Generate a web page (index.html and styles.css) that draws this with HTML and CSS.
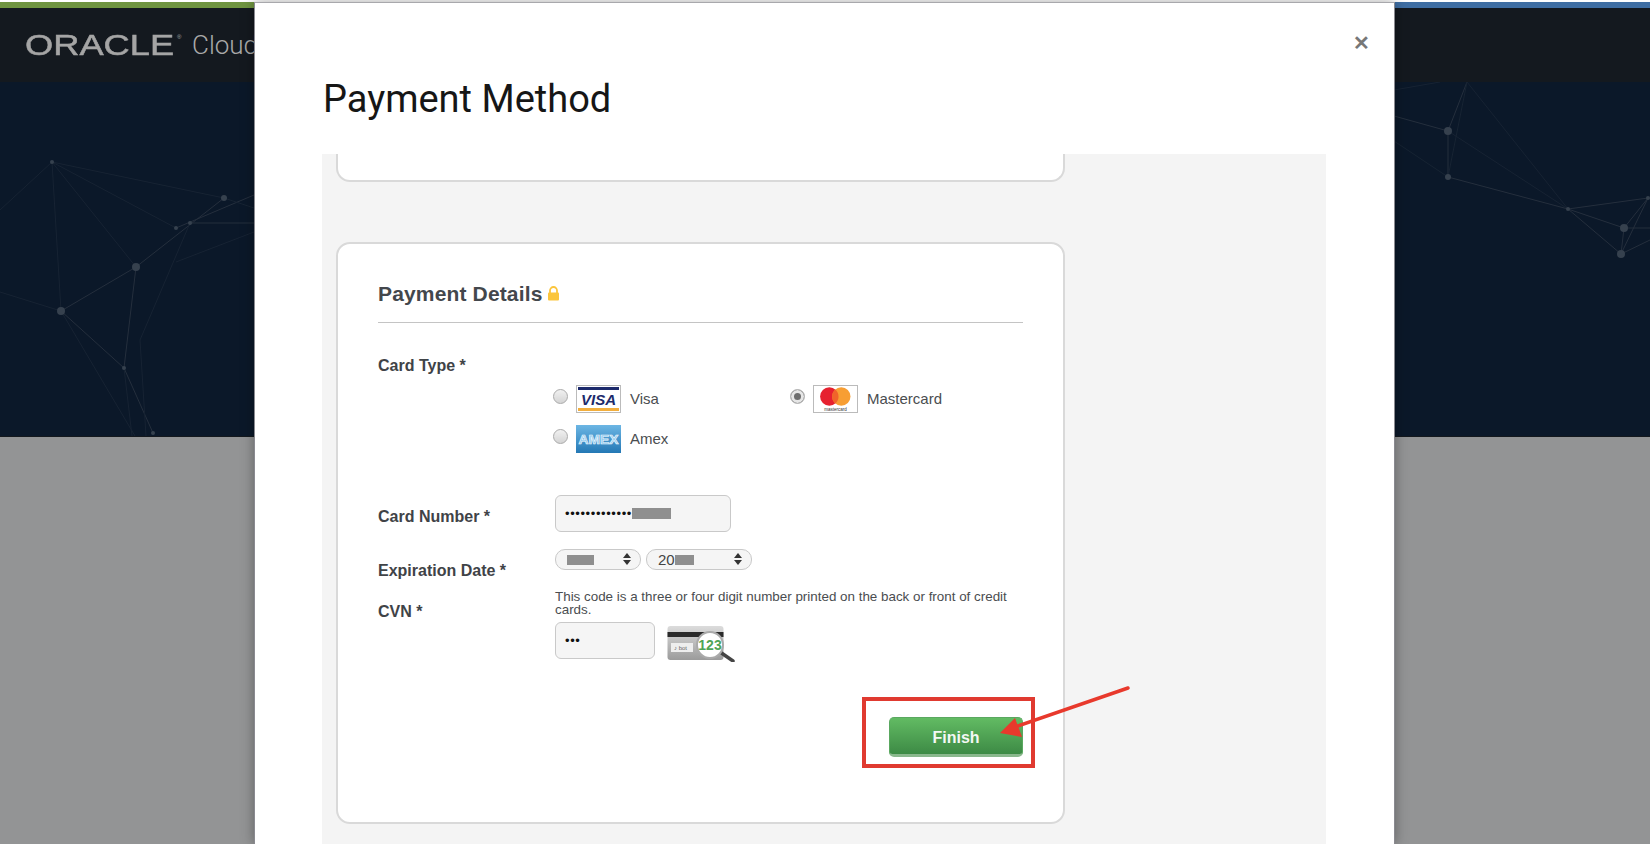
FILE: index.html

```html
<!DOCTYPE html>
<html lang="en">
<head>
    <meta charset="UTF-8">
    <meta name="viewport" content="width=device-width, initial-scale=1.0">
    <title>Payment Method</title>
    <link rel="stylesheet" href="styles.css">
</head>
<body>
    <div class="backdrop">
        <div class="topstrip"></div>
        <header class="topbar">
            <span class="logo">ORACLE</span><span class="logo-reg">®</span>
            <span class="product">Cloud</span>
        </header>
        <div class="hero">
            <svg class="network" width="1650" height="354" viewBox="0 82 1650 354">
                <g class="lines">
                    <path d="M61 311L136 267L224 198M61 311L124 368M136 267L124 368L153 433M176 228L254 195M190 223L254 223"/>
                    <path d="M1394 116L1448 131L1448 177L1568 209L1624 228L1650 228M1448 131L1467 82M1568 209L1621 254L1624 228L1648 198L1621 254L1650 240M1568 209L1648 198"/>
                </g>
                <g class="lines faint">
                    <path d="M0 210L52 162L61 311M52 162L136 267M52 162L176 228M52 162L224 198M0 292L61 311M61 311L135 436M124 368L132 436M224 198L254 208M190 223L140 340L146 436M254 232L176 262"/>
                    <path d="M1467 82L1448 177L1394 141M1448 131L1568 209M1467 82L1568 209M1394 90L1440 82"/>
                </g>
                <g class="nodes">
                    <circle cx="52" cy="162" r="2"/>
                    <circle cx="61" cy="311" r="4"/>
                    <circle cx="136" cy="267" r="4"/>
                    <circle cx="124" cy="368" r="2"/>
                    <circle cx="176" cy="228" r="2"/>
                    <circle cx="190" cy="223" r="2"/>
                    <circle cx="224" cy="198" r="3"/>
                    <circle cx="153" cy="433" r="2"/>
                    <circle cx="1448" cy="131" r="4"/>
                    <circle cx="1448" cy="177" r="3"/>
                    <circle cx="1568" cy="209" r="2"/>
                    <circle cx="1624" cy="228" r="4"/>
                    <circle cx="1621" cy="254" r="4"/>
                    <circle cx="1648" cy="198" r="2"/>
                </g>
            </svg>
        </div>
        <div class="lower"></div>
    </div>

    <div class="modal">
        <span class="close">&#10005;</span>
        <h1 class="modal-title">Payment Method</h1>
        <div class="panel">
            <div class="card-stub"></div>
            <section class="card">
                <h2 class="card-title">Payment Details
                    <svg class="lock" width="13" height="15" viewBox="0 0 13 15">
                        <path d="M3 7V4.500a3.500 3.500 0 0 1 7 0V7" fill="none" stroke="#fbc53c" stroke-width="1.800"/>
                        <rect x="1" y="6.500" width="11" height="8" rx="1" fill="#fbc53c"/>
                    </svg>
                </h2>

                <div class="row type-row">
                    <label class="field-label">Card Type *</label>
                    <div class="card-options">
                        <div class="option">
                            <span class="radio"></span>
                            <svg class="card-img" width="45" height="28" viewBox="0 0 45 28">
                                <rect x="0.500" y="0.500" width="44" height="27" fill="#fff" stroke="#bbb"/>
                                <rect x="2" y="2" width="41" height="3" fill="#1c2a6b"/>
                                <rect x="2" y="23" width="41" height="3" fill="#f2ae3d"/>
                                <text class="visa-text" x="22.500" y="19.500" text-anchor="middle">VISA</text>
                            </svg>
                            <span class="option-name">Visa</span>
                        </div>
                        <div class="option">
                            <span class="radio checked"></span>
                            <svg class="card-img" width="45" height="28" viewBox="0 0 45 28">
                                <rect x="0.500" y="0.500" width="44" height="27" fill="#fff" stroke="#bbb"/>
                                <circle cx="16.300" cy="11.500" r="9.200" fill="#e6212f"/>
                                <circle cx="28.300" cy="11.500" r="9.200" fill="#f79e33"/>
                                <path d="M22.300 4.500A9.200 9.200 0 0 1 22.300 18.500A9.200 9.200 0 0 1 22.300 4.500z" fill="#f0642a"/>
                                <text class="mc-text" x="22.500" y="25.500" text-anchor="middle">mastercard</text>
                            </svg>
                            <span class="option-name">Mastercard</span>
                        </div>
                        <div class="option">
                            <span class="radio"></span>
                            <svg class="card-img" width="45" height="28" viewBox="0 0 45 28">
                                <defs>
                                    <linearGradient id="amexbg" x1="0" y1="0" x2="0" y2="1">
                                        <stop offset="0" stop-color="#6cb6e4"/>
                                        <stop offset="1" stop-color="#2478b5"/>
                                    </linearGradient>
                                </defs>
                                <rect width="45" height="28" fill="url(#amexbg)"/>
                                <text class="amex-text" x="22.500" y="18.500" text-anchor="middle" textLength="40" lengthAdjust="spacingAndGlyphs">AMEX</text>
                            </svg>
                            <span class="option-name">Amex</span>
                        </div>
                    </div>
                </div>

                <div class="row number-row">
                    <label class="field-label">Card Number *</label>
                    <div class="input number-input">
                        <span class="dots">•••••••••••••</span><span class="redact redact-num"></span>
                    </div>
                </div>

                <div class="row date-row">
                    <label class="field-label">Expiration Date *</label>
                    <div class="select month-select">
                        <span class="redact redact-month"></span>
                        <span class="arrows"></span>
                    </div>
                    <div class="select year-select">
                        <span>20</span><span class="redact redact-year"></span>
                        <span class="arrows"></span>
                    </div>
                </div>

                <div class="row cvn-row">
                    <label class="field-label">CVN *</label>
                    <div class="cvn-field">
                        <p class="hint">This code is a three or four digit number printed on the back or front of credit cards.</p>
                        <div class="cvn-inputs">
                            <div class="input cvn-input"><span class="dots">•••</span></div>
                            <svg class="cvn-img" width="68" height="38" viewBox="0 0 68 38">
                                <defs>
                                    <linearGradient id="cvnbg" x1="0" y1="0" x2="0" y2="1">
                                        <stop offset="0" stop-color="#dcdcdc"/>
                                        <stop offset="1" stop-color="#9b9b9b"/>
                                    </linearGradient>
                                </defs>
                                <rect x="0.500" y="2" width="56" height="34" rx="3" fill="url(#cvnbg)"/>
                                <rect x="0.500" y="8" width="56" height="5" fill="#2a2a2a"/>
                                <rect x="4" y="19" width="22" height="9" fill="#eee"/>
                                <text class="sig-text" x="7" y="26">♪ bot</text>
                                <path d="M53 28L66 37" stroke="#444" stroke-width="3.500" stroke-linecap="round"/>
                                <circle cx="43" cy="21" r="13" fill="#fff" stroke="#aaa" stroke-width="2"/>
                                <text class="cvn-text" x="43" y="26" text-anchor="middle">123</text>
                            </svg>
                        </div>
                    </div>
                </div>

                <div class="actions">
                    <button class="finish" type="button">Finish</button>
                    <div class="callout"></div>
                    <svg class="pointer" width="140" height="60" viewBox="0 0 140 60">
                        <line x1="136" y1="3" x2="20" y2="43" stroke="#e8392c" stroke-width="3.500" stroke-linecap="round"/>
                        <polygon points="8,48 23,33 30,52" fill="#e8392c"/>
                    </svg>
                </div>
            </section>
        </div>
    </div>
</body>
</html>
```

FILE: styles.css

```css
html, body {
    margin: 0;
    padding: 0;
    height: 100%;
    overflow: hidden;
}

body {
    position: relative;
    background-color: #fff;
    font-family: 'Liberation Sans', Arial, sans-serif;
    color: #3f4347;
}

/* page behind the dialog */
.backdrop {
    display: flex;
    flex-direction: column;
    height: 100%;
}

.topstrip {
    height: 6px;
    margin-top: 2px;
    background: linear-gradient(to right, #6f9440 0, #6f9440 50%, #3f6ea3 50%, #3f6ea3 100%);
}

.topbar {
    display: flex;
    align-items: center;
    height: 74px;
    padding-left: 25px;
    background-color: #14191f;
    color: #a9a9a9;
}

.logo {
    display: inline-block;
    width: 119px;
    margin-right: 32px;
    font-size: 29px;
    line-height: 1;
    color: #a5a5a5;
    -webkit-text-stroke: 0.5px #a5a5a5;
    transform: scaleX(1.25);
    transform-origin: left center;
}

.logo-reg {
    margin: -16px 0 0 1px;
    font-size: 6px;
    width: 6px;
}

.product {
    margin-left: 9px;
    font-family: Roboto, sans-serif;
    font-weight: 300;
    font-size: 26px;
}

.hero {
    height: 354px;
    background-color: #0b1829;
    border-bottom: 1px solid #14181d;
    overflow: hidden;
}

.network {
    display: block;
    filter: blur(0.5px);
}

.lines path {
    fill: none;
    stroke: #252f3d;
    stroke-width: 1;
}

.lines.faint path {
    stroke: #172333;
}

.nodes circle {
    fill: #36414e;
}

.lower {
    flex: 1;
    background-color: #939495;
}

/* dialog */
.modal {
    position: absolute;
    top: 2px;
    left: 254px;
    width: 1141px;
    height: 842px;
    background-color: #fff;
    border-left: 1px solid #8a8a90;
    border-right: 1px solid #8a8a90;
    border-top: 1px solid #a8a8ac;
    box-shadow: 0 0 12px rgba(0, 0, 0, 0.35);
    box-sizing: border-box;
}

.close {
    position: absolute;
    top: 28px;
    right: 24px;
    font-size: 20px;
    font-weight: bold;
    line-height: 24px;
    color: #777;
}

.modal-title {
    box-sizing: border-box;
    margin: 0;
    padding: 74px 0 0 68px;
    height: 151px;
    font-family: Roboto, sans-serif;
    font-weight: 400;
    font-size: 38px;
    line-height: 44px;
    color: #161616;
}

.panel {
    width: 1004px;
    margin-left: 67px;
    height: 690px;
    background-color: #f4f4f4;
    overflow: hidden;
}

.card-stub {
    box-sizing: border-box;
    width: 729px;
    height: 28px;
    margin-left: 14px;
    background-color: #fff;
    border: 2px solid #d9d9d9;
    border-top: none;
    border-radius: 0 0 14px 14px;
}

.card {
    box-sizing: border-box;
    width: 729px;
    height: 582px;
    margin: 60px 0 0 14px;
    padding: 37px 40px 0;
    background-color: #fff;
    border: 2px solid #d9d9d9;
    border-radius: 14px;
}

.card-title {
    box-sizing: border-box;
    display: flex;
    align-items: center;
    gap: 4px;
    margin: 0;
    height: 42px;
    padding-bottom: 16px;
    border-bottom: 1px solid #c4c4c4;
    font-size: 21px;
    font-weight: bold;
    letter-spacing: 0.15px;
    line-height: 24px;
    color: #43474c;
}

.lock {
    display: block;
}

.row {
    display: flex;
}

.field-label {
    flex: 0 0 177px;
    font-size: 16px;
    font-weight: bold;
    line-height: 20px;
    color: #3f4347;
}

.type-row {
    margin-top: 33px;
}

.card-options {
    display: grid;
    grid-template-columns: 237px 237px;
    row-gap: 12px;
    margin-top: 29px;
    margin-left: -2px;
}

.option {
    display: flex;
    align-items: flex-start;
    height: 28px;
}

.radio {
    box-sizing: border-box;
    width: 15px;
    height: 15px;
    margin: 4px 8px 0 0;
    border: 1px solid #aaa;
    border-radius: 50%;
    background: linear-gradient(#f1f1f1, #d4d4d4);
}

.radio.checked {
    background: #6d6d6d;
    border: 1px solid #bbb;
    box-shadow: inset 0 0 0 3px #e6e6e6;
}

.card-img {
    display: block;
}

.option-name {
    margin-left: 9px;
    font-size: 15px;
    line-height: 28px;
    color: #4a4d50;
}

.visa-text {
    font-family: 'Liberation Sans', sans-serif;
    font-size: 15px;
    font-weight: bold;
    font-style: italic;
    fill: #1c2a6b;
}

.mc-text {
    font-family: 'Liberation Sans', sans-serif;
    font-size: 4.500px;
    fill: #333;
}

.amex-text {
    font-family: 'Liberation Sans', sans-serif;
    font-size: 12px;
    font-weight: bold;
    fill: #8cc8ee;
    stroke: #eef7fd;
    stroke-width: 0.6px;
}

.sig-text {
    font-family: 'Liberation Sans', sans-serif;
    font-size: 6px;
    fill: #666;
}

.cvn-text {
    font-family: 'Liberation Sans', sans-serif;
    font-size: 14px;
    font-weight: bold;
    fill: #4fa556;
}

.input {
    box-sizing: border-box;
    display: flex;
    align-items: center;
    padding-left: 9px;
    height: 37px;
    background-color: #f5f5f5;
    border: 1px solid #c9c9c9;
    border-radius: 6px;
    font-size: 13px;
    color: #111;
}

.dots {
    letter-spacing: 0.6px;
}

.redact {
    display: inline-block;
    background-color: #8f8f8f;
    filter: blur(0.5px);
}

.redact-num {
    width: 39px;
    height: 11px;
}

.number-row {
    margin-top: 42px;
}

.number-row .field-label {
    margin-top: 12px;
}

.number-input {
    width: 176px;
}

.date-row {
    margin-top: 17px;
    gap: 5px;
    height: 31px;
}

.date-row .field-label {
    margin: 12px -5px 0 0;
}

.select {
    box-sizing: border-box;
    position: relative;
    display: flex;
    align-items: center;
    height: 21px;
    padding-left: 11px;
    background-color: #f5f5f5;
    border: 1px solid #c9c9c9;
    border-radius: 10px;
    font-size: 15px;
    color: #444;
}

.month-select {
    width: 86px;
}

.year-select {
    width: 106px;
}

.redact-month {
    width: 27px;
    height: 10px;
}

.redact-year {
    width: 19px;
    height: 10px;
}

/* up/down carets of the select */
.arrows {
    position: absolute;
    right: 9px;
    top: 3px;
    width: 0;
    height: 0;
    border-left: 4px solid transparent;
    border-right: 4px solid transparent;
    border-bottom: 5px solid #333;
}

.arrows::after {
    content: "";
    position: absolute;
    left: -4px;
    top: 7px;
    border-left: 4px solid transparent;
    border-right: 4px solid transparent;
    border-top: 5px solid #333;
}

.cvn-row {
    margin-top: 10px;
}

.cvn-row .field-label {
    margin-top: 12px;
}

.hint {
    width: 460px;
    margin: 0;
    font-size: 13.400px;
    line-height: 13px;
    color: #4a4d50;
}

.cvn-inputs {
    display: flex;
    margin-top: 6px;
    gap: 12px;
}

.cvn-input {
    width: 100px;
}

.cvn-img {
    display: block;
    margin-top: 2px;
}

.actions {
    position: relative;
    display: flex;
    justify-content: flex-end;
    margin-top: 55px;
}

.finish {
    width: 134px;
    height: 40px;
    padding: 3px 0 0;
    border: 1px solid #5aa860;
    border-bottom: 3px solid #8ab88d;
    border-radius: 5px;
    background: linear-gradient(#62bb63, #3d8a45);
    color: #f4f8f4;
    font-family: 'Liberation Sans', Arial, sans-serif;
    font-size: 16px;
    font-weight: bold;
}

.callout {
    position: absolute;
    top: -20px;
    right: -12px;
    box-sizing: border-box;
    width: 173px;
    height: 71px;
    border: 4px solid #e03a30;
}

.pointer {
    position: absolute;
    top: -32px;
    right: -109px;
}
```
